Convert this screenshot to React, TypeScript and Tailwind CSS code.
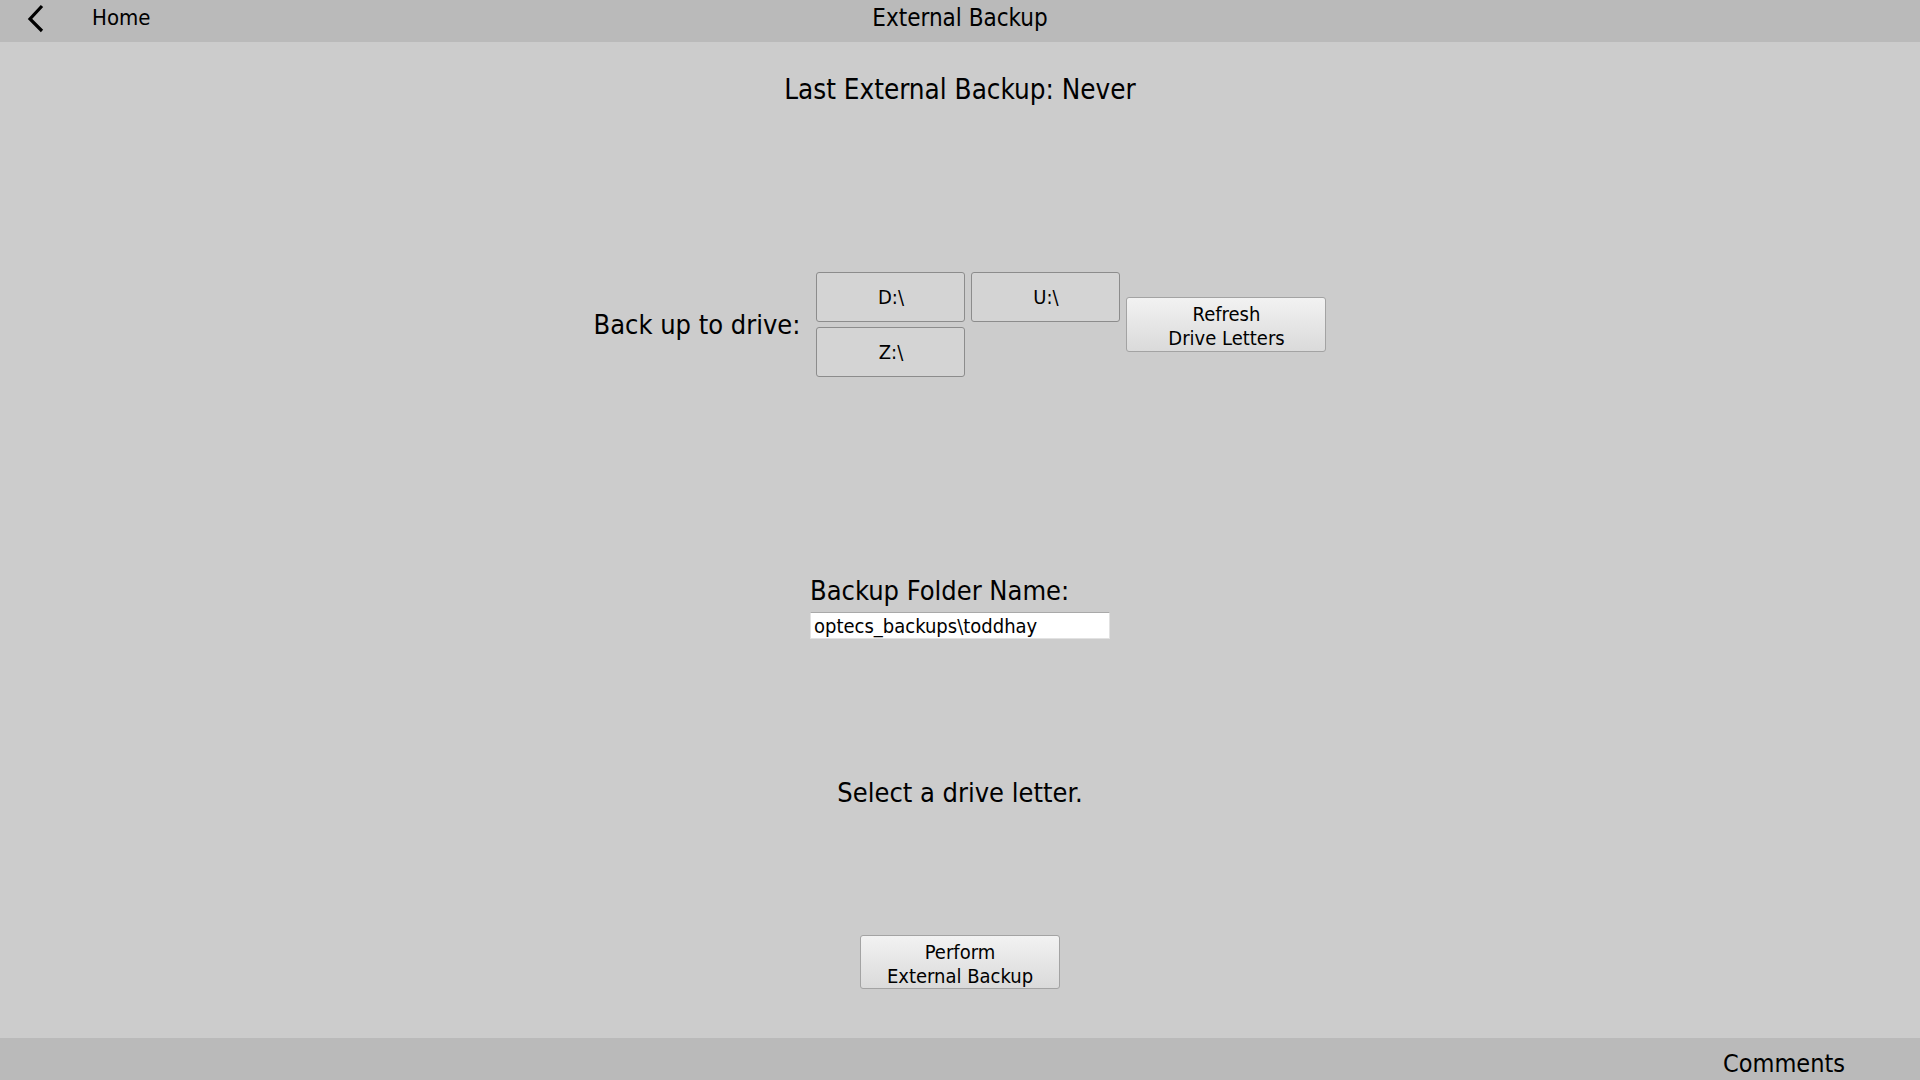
import { useState } from "react";

const drives = ["D:\\", "U:\\", "Z:\\"];

export default function App() {
  const [folder, setFolder] = useState("optecs_backups\\toddhay");
  const [selected, setSelected] = useState<string | null>(null);

  return (
    <div className="h-screen flex flex-col bg-[#cccccc] text-black font-['DejaVu_Sans_Condensed','DejaVu_Sans',sans-serif] [font-stretch:condensed] overflow-hidden">
      {/* Top bar */}
      <div className="h-[42px] shrink-0 bg-[#bababa] grid grid-cols-[1fr_auto_1fr] items-center">
        <div className="flex items-center">
          <button className="ml-[27px] w-[18px] h-[30px] mb-[6px] flex items-center justify-center">
            <svg width="18" height="30" viewBox="0 0 18 30">
              <polyline points="15,3 3,16 15,28" fill="none" stroke="black" strokeWidth="3.2" strokeLinejoin="miter" />
            </svg>
          </button>
          <span className="ml-[47px] text-[22px] leading-none pb-[7px]">Home</span>
        </div>
        <div className="text-[24px] leading-none pb-[6px]">External Backup</div>
        <div />
      </div>

      {/* Main content */}
      <div className="flex-1 flex flex-col items-center">
        <div className="mt-[31px] text-[27.6px] leading-[34px]">Last External Backup: Never</div>

        <div className="mt-[165px] flex items-center">
          <span className="text-[27px] leading-[34px] mr-[16px]">Back up to drive:</span>
          <div className="grid grid-cols-[149px_149px] gap-x-[6px] gap-y-[5px]">
            {drives.map((d) => (
              <button
                key={d}
                onClick={() => setSelected(d)}
                className={`h-[50px] rounded-[3px] border border-[#8c8c8c] text-[20px] ${
                  selected === d ? "bg-[#bcd4ea]" : "bg-[#d4d4d4]"
                }`}
              >
                {d}
              </button>
            ))}
          </div>
          <button className="ml-[6px] w-[200px] h-[55px] rounded-[3px] border border-[#a3a3a3] bg-gradient-to-b from-[#f2f2f2] to-[#dadada] text-[20px] leading-[24px] pt-[2px]">
            Refresh
            <br />
            Drive Letters
          </button>
        </div>

        <div className="mt-[197px] flex flex-col items-start">
          <label className="text-[27px] leading-[34px]">Backup Folder Name:</label>
          <input
            value={folder}
            onChange={(e) => setFolder(e.target.value)}
            className="mt-[4px] w-[300px] h-[27px] bg-white border border-[#e2e2e2] border-t-[#a9a9a9] px-[3px] text-[20px] leading-none outline-none"
          />
        </div>

        <div className="mt-[137px] text-[27px] leading-[34px]">Select a drive letter.</div>

        <button className="mt-[125px] w-[200px] h-[54px] rounded-[3px] border border-[#a3a3a3] bg-gradient-to-b from-[#f2f2f2] to-[#dadada] text-[20px] leading-[24px] pt-[3px]">
          Perform
          <br />
          External Backup
        </button>
      </div>

      {/* Bottom bar */}
      <div className="h-[42px] shrink-0 bg-[#bababa] flex justify-end items-start">
        <span className="mr-[75px] mt-[10px] text-[25px] leading-[32px]">Comments</span>
      </div>
    </div>
  );
}
